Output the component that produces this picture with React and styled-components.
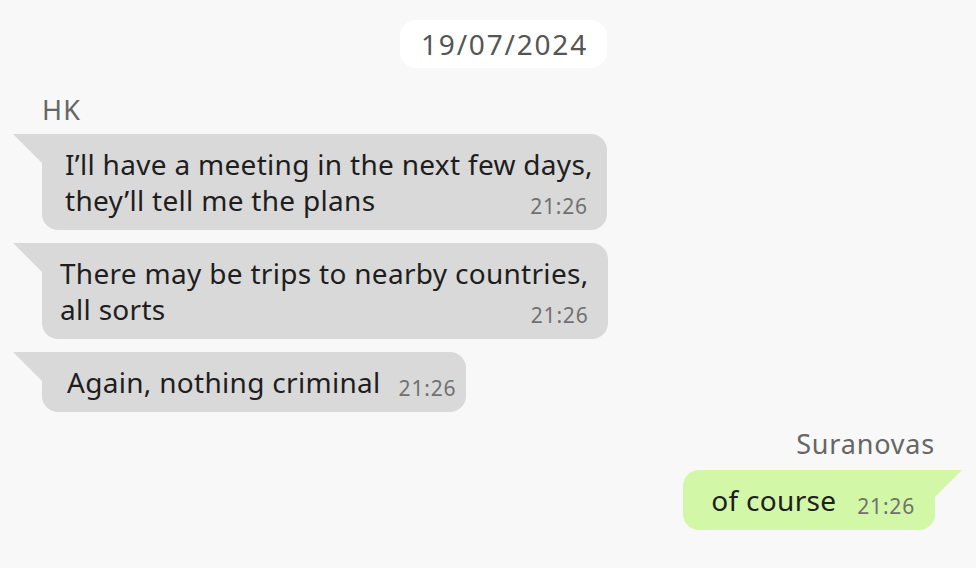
import React from "react";
import styled, { createGlobalStyle } from "styled-components";

const Global = createGlobalStyle`
  html, body { margin: 0; padding: 0; background: #f8f8f8; }
  body { font-family: "Noto Sans", "Open Sans", sans-serif; }
`;

const Page = styled.div`
  width: 976px;
  height: 568px;
  box-sizing: border-box;
  padding: 20px 41px 0 42px;
  display: flex;
  flex-direction: column;
  overflow: hidden;
`;

const DateRow = styled.div`
  display: flex;
  justify-content: center;
  padding-left: 30px;
`;

const DatePill = styled.div`
  background: #ffffff;
  color: #555555;
  font-size: 28px;
  letter-spacing: 1.8px;
  height: 48px;
  line-height: 48px;
  padding: 0 19px 0 21px;
  border-radius: 16px;
`;

const Sender = styled.div`
  color: #666666;
  font-size: 27px;
  letter-spacing: ${(p) => p.$spacing}px;
  line-height: 36px;
  margin-top: ${(p) => p.$top}px;
  margin-bottom: ${(p) => p.$bottom}px;
  align-self: ${(p) => (p.$mine ? "flex-end" : "flex-start")};
`;

const Bubble = styled.div`
  position: relative;
  align-self: ${(p) => (p.$mine ? "flex-end" : "flex-start")};
  background: ${(p) => (p.$mine ? "#d2f7a6" : "#d9d9d9")};
  color: #1e1e1e;
  font-size: 28px;
  letter-spacing: 0.3px;
  line-height: 36px;
  padding: 12px ${(p) => p.$right}px 12px ${(p) => p.$left}px;
  border-radius: ${(p) => (p.$mine ? "16px 0 16px 16px" : "0 16px 16px 16px")};
  margin-bottom: 13px;
  display: flex;
  flex-direction: column;

  &::before {
    content: "";
    position: absolute;
    top: 0;
    width: 30px;
    height: 30px;
    background: inherit;
    ${(p) =>
      p.$mine
        ? "right: -27px; clip-path: polygon(0 0, 100% 0, 0 100%);"
        : "left: -29px; clip-path: polygon(0 0, 100% 0, 100% 100%);"}
  }
`;

const Line = styled.div`
  white-space: nowrap;
`;

const LastLine = styled.div`
  display: flex;
  align-items: baseline;
  justify-content: space-between;
  gap: ${(p) => p.$gap}px;
  white-space: nowrap;
  height: 36px;
`;

const Time = styled.span`
  color: #707070;
  font-size: 21px;
  letter-spacing: 0.8px;
  line-height: 20px;
  position: relative;
  top: 3px;
  margin-right: ${(p) => p.$end}px;
`;

function Message({ lines, mine, left = 23, right = 19, gap = 18, end = 0 }) {
  const head = lines.slice(0, -1);
  const last = lines[lines.length - 1];
  return (
    <Bubble $mine={mine} $left={left} $right={right}>
      {head.map((l, i) => (
        <Line key={i}>{l}</Line>
      ))}
      <LastLine $gap={gap}>
        <span>{last}</span>
        <Time $end={end}>21:26</Time>
      </LastLine>
    </Bubble>
  );
}

export default function App() {
  return (
    <>
      <Global />
      <Page>
        <DateRow>
          <DatePill>19/07/2024</DatePill>
        </DateRow>
        <Sender $top={24} $bottom={6} $spacing={1.2}>HK</Sender>
        <Message
          lines={["I’ll have a meeting in the next few days,", "they’ll tell me the plans"]}
          right={14}
          end={5}
        />
        <Message
          lines={["There may be trips to nearby countries,", "all sorts"]}
          left={18}
        />
        <Message lines={["Again, nothing criminal"]} left={25} right={10} />
        <Sender $mine $top={1} $bottom={8} $spacing={0.8}>Suranovas</Sender>
        <Message mine lines={["of course"]} left={28} right={20} gap={21} />
      </Page>
    </>
  );
}
